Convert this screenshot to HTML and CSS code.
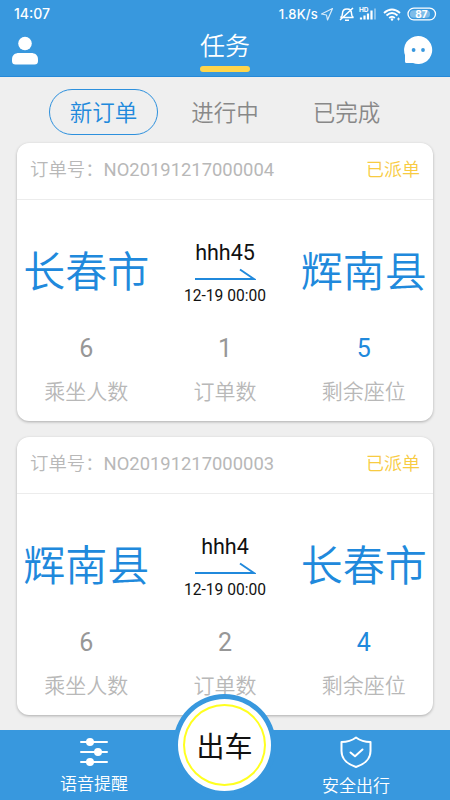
FILE: index.html
```html
<!DOCTYPE html>
<html lang="zh-CN">
<head>
<meta charset="utf-8">
<title>任务</title>
<link rel="stylesheet" href="styles.css">
</head>
<body>
<div class="app">
  <header class="header">
    <div class="status">
      <span class="time">14:07</span>
      <span class="speed">1.8K/s</span>
      <svg class="status-icons" width="118" height="18" viewBox="0 0 118 18" fill="none" stroke="#fff" stroke-width="1.2">
        <path d="M12.500 3.500 1.500 9l5 1 1 5z" opacity=".8" stroke-linejoin="round"/>
        <path d="M20.500 12.500q2-1 2-4c0-3 2-4.500 4.500-4.500s4.500 1.500 4.500 4.500q0 3 2 4zM25 15.200h4M20 15 33 3" stroke-width="1.500"/>
        <path d="M41 14.500v-2M44.500 14.500v-4M48 14.500v-6M51.500 14.500v-9" stroke-width="2.200"/>
        <path d="M55 14.500V3.500" stroke-width="2" opacity=".4"/>
        <path d="M64 8q8-7 16 0M66.500 10.500q5.500-5 11 0M69.200 13q2.800-2.500 5.600 0" stroke-width="1.900"/>
        <circle cx="72" cy="14.500" r="1.200" fill="#fff" stroke="none"/>
        <path d="M77 14h3m-1.500-1.500v3" stroke-width="1" opacity=".8"/>
        <rect x="88" y="3.200" width="27.500" height="11.600" rx="5.800" stroke-width="1.300"/>
        <rect x="90" y="5.200" width="20" height="7.600" rx="3.500" fill="#fff" opacity=".35" stroke="none"/>
        <text class="hd" x="39" y="6.700">HD</text>
        <text class="battery" x="101.500" y="12.700" text-anchor="middle">87</text>
      </svg>
    </div>
    <div class="titlebar">
      <svg class="user" width="28" height="30" viewBox="0 0 28 30" fill="#fff">
        <circle cx="14" cy="7.500" r="6.800"/>
        <path d="M1 25v-1.500C1 19 4 17 8 17h12c4 0 7 2 7 6.500V25q0 3.500-3.500 3.500h-19Q1 28.500 1 25z"/>
      </svg>
      <h1 class="title">任务</h1>
      <svg class="chat" width="30" height="30" viewBox="0 0 30 30">
        <path d="M15 1A14 14 0 1 1 10 28H3.500Q2 28 2 26.500V20A14 14 0 0 1 15 1z" fill="#fff"/>
        <circle cx="10.600" cy="15" r="1.900" fill="#3898de"/><circle cx="20" cy="15" r="1.900" fill="#3898de"/>
      </svg>
    </div>
  </header>

  <nav class="tabs">
    <span class="tab active">新订单</span>
    <span class="tab">进行中</span>
    <span class="tab">已完成</span>
  </nav>

  <main class="orders">
    <article class="card">
      <div class="card-head"><span>订单号：<span class="number">NO20191217000004</span></span><span class="state">已派单</span></div>
      <div class="route">
        <span class="place">长春市</span>
        <div class="trip">
          <span class="name">hhh45</span>
          <svg class="arrow" width="62" height="14" viewBox="0 0 62 14" fill="none" stroke="#2089dc" stroke-width="2"><path d="M1 12H60L46 2.500"/></svg>
          <span class="date">12-19 00:00</span>
        </div>
        <span class="place">辉南县</span>
      </div>
      <div class="stats">
        <div class="stat"><b>6</b><span>乘坐人数</span></div>
        <div class="stat"><b>1</b><span>订单数</span></div>
        <div class="stat seats"><b>5</b><span>剩余座位</span></div>
      </div>
    </article>
    <article class="card">
      <div class="card-head"><span>订单号：<span class="number">NO20191217000003</span></span><span class="state">已派单</span></div>
      <div class="route">
        <span class="place">辉南县</span>
        <div class="trip">
          <span class="name">hhh4</span>
          <svg class="arrow" width="62" height="14" viewBox="0 0 62 14" fill="none" stroke="#2089dc" stroke-width="2"><path d="M1 12H60L46 2.500"/></svg>
          <span class="date">12-19 00:00</span>
        </div>
        <span class="place">长春市</span>
      </div>
      <div class="stats">
        <div class="stat"><b>6</b><span>乘坐人数</span></div>
        <div class="stat"><b>2</b><span>订单数</span></div>
        <div class="stat seats"><b>4</b><span>剩余座位</span></div>
      </div>
    </article>
  </main>

  <footer class="footer">
    <div class="action voice">
      <svg width="28" height="28" viewBox="0 0 28 28" fill="#fff" stroke="#fff" stroke-width="2" stroke-linecap="round">
        <path d="M1 4h26M1 14h26M1 24h26"/>
        <circle cx="10" cy="4" r="3"/><circle cx="18" cy="14" r="3"/><circle cx="10" cy="24" r="3"/>
      </svg>
      <span>语音提醒</span>
    </div>
    <div class="action safety">
      <svg width="32" height="32" viewBox="0 0 32 32" fill="none" stroke="#fff" stroke-width="2" stroke-linecap="round" stroke-linejoin="round">
        <path d="M16 1.500Q10 6 1.500 6v9C1.500 23 8 28.500 16 31c8-2.500 14.500-8 14.500-16V6Q22 6 16 1.500z"/>
        <path d="m10.500 16.500 4.500 3.800 7.500-6.800"/>
      </svg>
      <span>安全出行</span>
    </div>
    <div class="depart"><span>出车</span></div>
  </footer>
</div>
</body>
</html>
```

FILE: styles.css
```css
* { box-sizing: border-box; }
body {
  margin: 0;
  background: #efefef;
  font-family: Roboto, "Noto Sans CJK SC", sans-serif;
}
.app {
  width: 450px;
  height: 800px;
  display: flex;
  flex-direction: column;
  overflow: hidden;
}
.header {
  height: 77px;
  flex: none;
  background: #3898de;
  border-bottom: 1px solid #2589d8;
  color: #fff;
}
.status {
  height: 28px;
  padding: 0 12px 0 14px;
  display: flex;
  align-items: center;
  font: 500 14px/28px Inter, sans-serif;
}
.speed {
  margin-left: auto;
  margin-right: 2px;
  font-size: 13px;
  letter-spacing: .2px;
}
.hd { font: 700 6.500px Inter, sans-serif; fill: #fff; stroke: none; }
.battery { font: 700 10px Inter, sans-serif; fill: #fff; stroke: none; }
.titlebar {
  height: 48px;
  padding: 0 17px 0 11px;
  display: grid;
  grid-template-columns: 1fr 50px 1fr;
}
.user { margin-top: 8px; }
.chat { margin-top: 7px; justify-self: end; }
.title {
  margin: 0 -3px 0 3px;
  height: 44px;
  font-size: 25px;
  font-weight: 350;
  line-height: 38px;
  text-align: center;
  white-space: nowrap;
}
.title::after {
  content: "";
  display: block;
  height: 6px;
  border-radius: 3px;
  background: #ffd54a;
}
.tabs {
  height: 66px;
  flex: none;
  padding: 12px 0 0 49px;
  display: flex;
  gap: 12.500px;
}
.tab {
  width: 109px;
  height: 46px;
  border: 1px solid transparent;
  border-radius: 23px;
  color: #888;
  font-size: 22.500px;
  font-weight: 350;
  line-height: 47px;
  text-align: center;
}
.tab.active { color: #2089dc; border-color: #2d90dd; }
.orders {
  flex: 1;
  padding: 0 17px;
  display: flex;
  flex-direction: column;
  gap: 16px;
}
.card {
  height: 278px;
  flex: none;
  border-radius: 12px;
  background: #fff;
  box-shadow: 0 1px 3px rgba(0, 0, 0, .28);
}
.card-head {
  height: 57px;
  padding: 0 13px;
  border-bottom: 1px solid #ececec;
  display: flex;
  justify-content: space-between;
  color: #b8b8b8;
  font-size: 18.400px;
  font-weight: 350;
  line-height: 54px;
}
.number { font-weight: 400; }
.state { color: #f8cb42; font-size: 18px; }
.route, .stats {
  display: grid;
  grid-template-columns: repeat(3, 1fr);
  text-align: center;
}
.route { height: 129px; }
.place {
  color: #2089dc;
  font-size: 42px;
  font-weight: 350;
  line-height: 146px;
  white-space: nowrap;
}
.trip {
  padding-top: 39px;
  display: flex;
  flex-direction: column;
  align-items: center;
  color: #111;
}
.name { font-size: 21.500px; line-height: 28px; }
.arrow { margin-top: 0; }
.date { font-size: 15.600px; line-height: 20px; margin-top: 5px; }
.stat { display: flex; flex-direction: column; color: #b8b8b8; }
.stat b { color: #979797; font-weight: 400; font-size: 25px; line-height: 40px; }
.stat span { font-size: 21px; font-weight: 350; line-height: 30px; margin-top: 8px; }
.stat.seats b { color: #2089dc; }
.footer {
  position: relative;
  height: 70px;
  flex: none;
  background: #3898de;
  color: #fff;
  display: flex;
  justify-content: space-between;
  padding: 0 60px;
}
.action {
  width: 68px;
  display: flex;
  flex-direction: column;
  align-items: center;
  font-size: 17px;
  font-weight: 350;
  line-height: 24px;
  white-space: nowrap;
}
.voice svg { margin: 8px 0 6px; }
.safety svg { margin: 6px 0 6px; }
.depart {
  position: absolute;
  left: 173px;
  top: -36px;
  width: 103px;
  height: 102px;
  border: 5px solid #3898de;
  border-radius: 50%;
  background: #fff;
  padding: 5px;
}
.depart span {
  display: block;
  height: 82px;
  border: 2px solid #ffff20;
  border-radius: 50%;
  color: #111;
  font-size: 28px;
  line-height: 84px;
  text-align: center;
}
```
